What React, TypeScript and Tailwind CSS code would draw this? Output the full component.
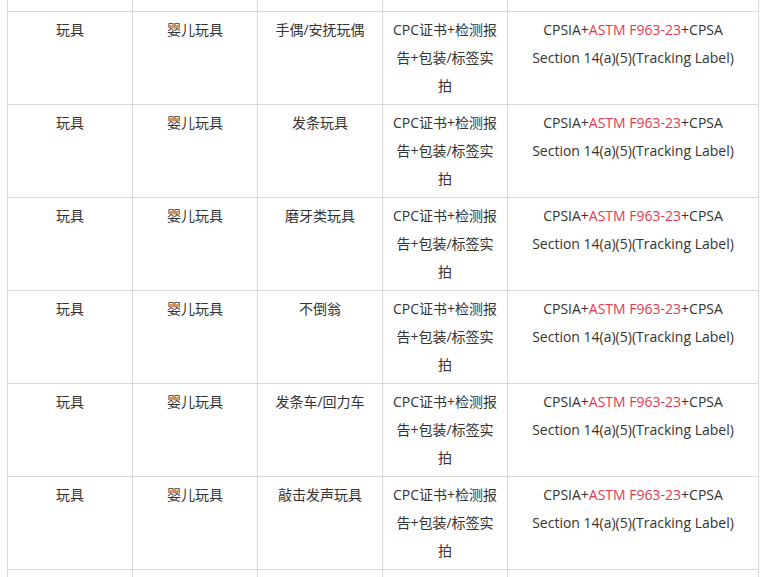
const rows = [
  { cat: "玩具", sub: "婴儿玩具", item: "手偶/安抚玩偶" },
  { cat: "玩具", sub: "婴儿玩具", item: "手偶/安抚玩偶" },
  { cat: "玩具", sub: "婴儿玩具", item: "发条玩具" },
  { cat: "玩具", sub: "婴儿玩具", item: "磨牙类玩具" },
  { cat: "玩具", sub: "婴儿玩具", item: "不倒翁" },
  { cat: "玩具", sub: "婴儿玩具", item: "发条车/回力车" },
  { cat: "玩具", sub: "婴儿玩具", item: "敲击发声玩具" },
  { cat: "玩具", sub: "婴儿玩具", item: "拨浪鼓" },
];

const cell = "border border-[#d9d9d9] px-2 pt-[4px] pb-[3px] align-top text-center";

export default function App() {
  return (
    <div
      className="h-[577px] w-[768px] overflow-hidden bg-white text-[14px] leading-[28px] text-[#333333]"
      style={{ fontFamily: '"Open Sans", "Noto Sans CJK SC", sans-serif' }}
    >
      <table className="-mt-[82px] ml-[7px] w-[751px] table-fixed border-collapse">
        <colgroup>
          <col className="w-[125px]" />
          <col className="w-[125px]" />
          <col className="w-[125px]" />
          <col className="w-[125px]" />
          <col className="w-[251px]" />
        </colgroup>
        <tbody>
          {rows.map((r, i) => (
            <tr key={i} className="h-[93px]">
              <td className={cell}>{r.cat}</td>
              <td className={cell}>{r.sub}</td>
              <td className={cell}>{r.item}</td>
              <td className={cell}>CPC证书+检测报告+包装/标签实拍</td>
              <td className="border border-[#d9d9d9] px-[14px] pt-[4px] pb-[3px] align-top text-center">
                CPSIA+<span className="text-[#e8384f]">ASTM F963-23</span>+CPSA Section 14(a)(5)(Tracking Label)
              </td>
            </tr>
          ))}
        </tbody>
      </table>
    </div>
  );
}
